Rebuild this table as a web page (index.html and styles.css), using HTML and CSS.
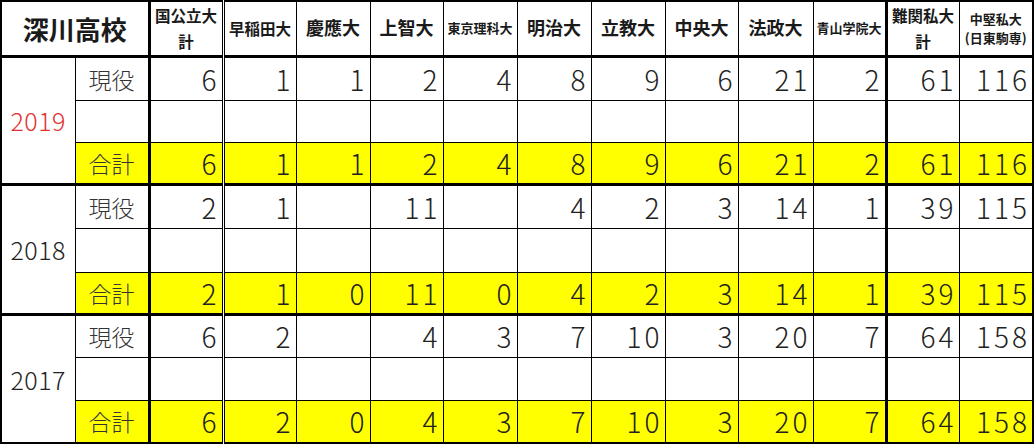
FILE: index.html
```html
<!DOCTYPE html>
<html lang="ja">
<head>
<meta charset="utf-8">
<title>深川高校</title>
<link rel="stylesheet" href="styles.css">
</head>
<body>
<table class="tbl">
  <colgroup>
    <col style="width:74px"><col style="width:74px"><col style="width:74px"><col style="width:73px"><col style="width:74px"><col style="width:73px"><col style="width:74px"><col style="width:74px"><col style="width:74px"><col style="width:73px"><col style="width:75px"><col style="width:73px"><col style="width:73px"><col style="width:74px">
  </colgroup>
  <tr class="head">
    <th class="school" colspan="2">深川高校</th>
    <th class="h16 thickl two"><span class="l1">国公立大</span><span class="l2">計</span></th>
    <th class="h16 dbl">早稲田大</th>
    <th class="h18">慶應大</th>
    <th class="h18">上智大</th>
    <th class="h13">東京理科大</th>
    <th class="h18">明治大</th>
    <th class="h18">立教大</th>
    <th class="h18">中央大</th>
    <th class="h18">法政大</th>
    <th class="h13">青山学院大</th>
    <th class="h16 thickl two"><span class="l1">難関私大</span><span class="l2">計</span></th>
    <th class="h13 two mid"><span class="l1">中堅私大</span><span class="l2">(日東駒専)</span></th>
  </tr>

  <tr class="grp ra">
    <td class="year red" rowspan="3">2019</td>
    <td class="kind">現役</td>
    <td class="num thickl">6</td><td class="num dbl">1</td><td class="num">1</td><td class="num">2</td><td class="num">4</td><td class="num">8</td><td class="num">9</td><td class="num">6</td><td class="num">21</td><td class="num">2</td><td class="num thickl">61</td><td class="num">116</td>
  </tr>
  <tr class="rb">
    <td class="kind"></td>
    <td class="num thickl"></td><td class="num dbl"></td><td class="num"></td><td class="num"></td><td class="num"></td><td class="num"></td><td class="num"></td><td class="num"></td><td class="num"></td><td class="num"></td><td class="num thickl"></td><td class="num"></td>
  </tr>
  <tr class="sum rc">
    <td class="kind">合計</td>
    <td class="num thickl">6</td><td class="num dbl">1</td><td class="num">1</td><td class="num">2</td><td class="num">4</td><td class="num">8</td><td class="num">9</td><td class="num">6</td><td class="num">21</td><td class="num">2</td><td class="num thickl">61</td><td class="num">116</td>
  </tr>

  <tr class="grp rd">
    <td class="year" rowspan="3">2018</td>
    <td class="kind">現役</td>
    <td class="num thickl">2</td><td class="num dbl">1</td><td class="num"></td><td class="num">11</td><td class="num"></td><td class="num">4</td><td class="num">2</td><td class="num">3</td><td class="num">14</td><td class="num">1</td><td class="num thickl">39</td><td class="num">115</td>
  </tr>
  <tr class="rd">
    <td class="kind"></td>
    <td class="num thickl"></td><td class="num dbl"></td><td class="num"></td><td class="num"></td><td class="num"></td><td class="num"></td><td class="num"></td><td class="num"></td><td class="num"></td><td class="num"></td><td class="num thickl"></td><td class="num"></td>
  </tr>
  <tr class="sum rc">
    <td class="kind">合計</td>
    <td class="num thickl">2</td><td class="num dbl">1</td><td class="num">0</td><td class="num">11</td><td class="num">0</td><td class="num">4</td><td class="num">2</td><td class="num">3</td><td class="num">14</td><td class="num">1</td><td class="num thickl">39</td><td class="num">115</td>
  </tr>

  <tr class="grp re">
    <td class="year" rowspan="3">2017</td>
    <td class="kind">現役</td>
    <td class="num thickl">6</td><td class="num dbl">2</td><td class="num"></td><td class="num">4</td><td class="num">3</td><td class="num">7</td><td class="num">10</td><td class="num">3</td><td class="num">20</td><td class="num">7</td><td class="num thickl">64</td><td class="num">158</td>
  </tr>
  <tr class="re">
    <td class="kind"></td>
    <td class="num thickl"></td><td class="num dbl"></td><td class="num"></td><td class="num"></td><td class="num"></td><td class="num"></td><td class="num"></td><td class="num"></td><td class="num"></td><td class="num"></td><td class="num thickl"></td><td class="num"></td>
  </tr>
  <tr class="sum re">
    <td class="kind">合計</td>
    <td class="num thickl">6</td><td class="num dbl">2</td><td class="num">0</td><td class="num">4</td><td class="num">3</td><td class="num">7</td><td class="num">10</td><td class="num">3</td><td class="num">20</td><td class="num">7</td><td class="num thickl">64</td><td class="num">158</td>
  </tr>
</table>
</body>
</html>
```

FILE: styles.css
```css
html, body {
  margin: 0;
  padding: 0;
  background: #ffffff;
}

body {
  font-family: "Noto Sans CJK JP", "Noto Sans", sans-serif;
  color: #222222;
}

.tbl {
  border-collapse: collapse;
  table-layout: fixed;
  width: 1032px;
  border: 2px solid #000000;
}

.tbl th,
.tbl td {
  border: 1px solid #000000;
  padding: 0;
  overflow: hidden;
  white-space: nowrap;
}

.head {
  height: 55px;
}

.head th {
  border-bottom: 3px solid #000000;
  font-weight: 700;
  color: #1a1a1a;
  text-align: center;
  vertical-align: middle;
  line-height: 1.2;
}

.school {
  font-size: 26px;
}

.h18 { font-size: 18px; }
.h16 { font-size: 15.5px; }
.h13 { font-size: 13px; }

.two .l1,
.two .l2 {
  display: block;
}

.two .l1 {
  margin-bottom: 8px;
}

.mid .l1 {
  margin-bottom: 4px;
}

.thickl {
  border-left: 3px solid #000000 !important;
}

.dbl {
  border-left: 3px double #000000 !important;
}

.grp td {
  border-top: 3px solid #000000;
}

.ra { height: 44px; }
.rb { height: 42px; }
.rc { height: 42px; }
.rd { height: 44px; }
.re { height: 43px; }

.year {
  font-size: 25px;
  font-weight: 300;
  letter-spacing: 0.5px;
  text-align: center;
  vertical-align: middle;
  color: #222222;
}

.red {
  color: #e03030;
}

.kind {
  font-size: 23px;
  font-weight: 300;
  text-align: center;
  vertical-align: middle;
  color: #333333;
}

.num {
  font-size: 28px;
  font-weight: 300;
  letter-spacing: 3px;
  text-align: right;
  vertical-align: middle;
  padding-right: 2px !important;
  color: #222222;
}

.sum td {
  background: #ffff00;
}
```
